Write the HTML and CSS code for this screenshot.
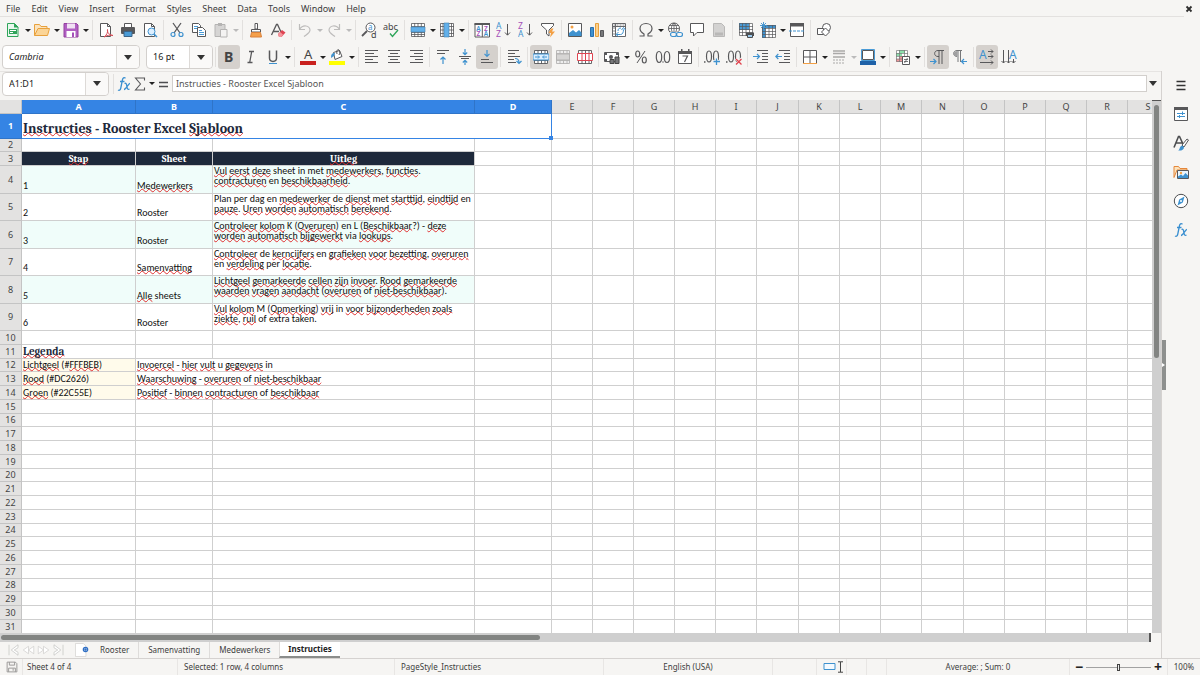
FILE: index.html
```html
<!DOCTYPE html>
<html lang="en">
<head>
<meta charset="utf-8">
<title>Rooster - Calc</title>
<link rel="stylesheet" href="styles.css">
</head>
<body>
<svg class="sprite" aria-hidden="true">
  <symbol id="i-new" viewBox="0 0 16 16"><path d="M2.500 1.500h7l3.500 3.500v9.500H2.500z" fill="#e9f7ee" stroke="#2fa55a"/><path d="M9 1v4.500h4.500z" fill="#2fa55a"/><path d="M4 7h8v5H4z" fill="#2fa55a"/><path d="M5 8.500h6M5 10.500h3" stroke="#fff"/></symbol>
  <symbol id="i-open" viewBox="0 0 16 16"><path d="M.5 13.500v-11h5l1.500 2h6v2" fill="#fbe3bd" stroke="#e8a13c"/><path d="M.5 13.500L4 6.500h11.500l-2 7z" fill="#fbd597" stroke="#e8a13c"/></symbol>
  <symbol id="i-save" viewBox="0 0 16 16"><path d="M1 1.500h12.500l1.500 1.500v12H1z" fill="#b05fc2" stroke="#94409f"/><path d="M4 1.500h8v5H4z" fill="#f1e2f4"/><path d="M3.500 9h9v6h-9z" fill="#fff"/><path d="M9 10.500h2V15H9z" fill="#a44fb8"/></symbol>
  <symbol id="i-pdf" viewBox="0 0 16 16"><path d="M2.500 1.500h7l3 3v10h-10z" fill="#fff" stroke="#58585a"/><path d="M9.500 1.500v3h3" fill="none" stroke="#58585a"/><path d="M6 15c3-2 4-5 3.500-7.500C9 11 11.500 13 15 13.500 12 12.500 9 13.500 6 15z" fill="#fff" stroke="#d64a55"/></symbol>
  <symbol id="i-print" viewBox="0 0 16 16"><path d="M4.500 5V1.500h7V5" fill="#fff" stroke="#58585a"/><rect x="1" y="5" width="14" height="7" rx="1" fill="#58585a"/><path d="M4 9.500h8v5H4z" fill="#4a9bd6" stroke="#3c6488"/></symbol>
  <symbol id="i-preview" viewBox="0 0 16 16"><path d="M2.500 1.500h7l3 3v10h-10z" fill="#fff" stroke="#58585a"/><path d="M9.500 1.500v3h3" fill="none" stroke="#58585a"/><circle cx="9.500" cy="9.500" r="3.500" fill="#dcefff" stroke="#3f92cf"/><path d="M12 12l3 3" stroke="#3f92cf" stroke-width="1.500"/></symbol>
  <symbol id="i-cut" viewBox="0 0 16 16"><path d="M4 1l7 10M12 1L5 11" stroke="#58585a" stroke-width="1.300"/><circle cx="4" cy="12.500" r="2" fill="none" stroke="#3f92cf" stroke-width="1.200"/><circle cx="12" cy="12.500" r="2" fill="none" stroke="#3f92cf" stroke-width="1.200"/></symbol>
  <symbol id="i-copy" viewBox="0 0 16 16"><path d="M1.500 1.500h6l2 2v7h-8z" fill="#fff" stroke="#58585a"/><path d="M6.500 5.500h5l3 3v6h-8z" fill="#fff" stroke="#58585a"/><path d="M8 8.500h3M8 10.500h5M8 12.500h5M3 4.500h4M3 6.500h3" stroke="#4a9bd6"/></symbol>
  <symbol id="i-paste" viewBox="0 0 16 16"><path d="M2 2.500h10v12H2z" fill="#d6d5d4" stroke="#b5b4b3"/><path d="M5 1h4v3H5z" fill="#b5b4b3"/><path d="M7.500 7.500h6.500v7.500H7.500z" fill="#f4f3f2" stroke="#b5b4b3"/></symbol>
  <symbol id="i-brush" viewBox="0 0 16 16"><path d="M7 1.500h2.500V7H7z" fill="#fff" stroke="#58585a"/><path d="M3.500 7.500h9V10h-9z" fill="#fff" stroke="#58585a"/><path d="M3.500 10.500h9l1 4.500h-11z" fill="#f5a04a" stroke="#d8803a"/></symbol>
  <symbol id="i-clear" viewBox="0 0 16 16"><path d="M1.500 13L6.500 2.500h1L11 10M3.500 9.500H9" fill="none" stroke="#58585a" stroke-width="1.300"/><path d="M8 12l4-4 3.500 2.500-4 4.500H9z" fill="#df4552"/><path d="M8 12l2-2 3 2.500-1.500 2.500H9z" fill="#f4949b"/></symbol>
  <symbol id="i-undo" viewBox="0 0 16 16"><path d="M2.500 2v5.500H8M2.500 7.500C6 2 12.500 3.500 13 8c0 3-3.500 4.500-6 6.500" fill="none" stroke="#bdbcbb" stroke-width="1.200"/></symbol>
  <symbol id="i-redo" viewBox="0 0 16 16"><path d="M13.500 2v5.500H8M13.500 7.500C10 2 3.500 3.500 3 8c0 3 3.500 4.500 6 6.500" fill="none" stroke="#bdbcbb" stroke-width="1.200"/></symbol>
  <symbol id="i-find" viewBox="0 0 16 16"><circle cx="9.500" cy="5.500" r="4.500" fill="#fff" stroke="#58585a"/><path d="M6 9l-5 5" stroke="#58585a" stroke-width="1.800"/><text x="7" y="8" font-size="8" fill="#3f92cf">a</text><text x="10" y="15.500" font-size="9" fill="#444">d</text></symbol>
  <symbol id="i-spell" viewBox="0 0 16 16"><text x="0" y="8" font-size="9" fill="#444">abc</text><path d="M7 11.500l2.500 3L15 8" fill="none" stroke="#2fa55a" stroke-width="1.400"/></symbol>
  <symbol id="i-rows" viewBox="0 0 16 16"><path d="M1.500 1.500h13v13h-13z" fill="#fff"/><path d="M1.500 1.500h13v13h-13zM1.500 4.500h13M1.500 10.500h13M4.700 1v14M8 1v14M11.300 1v14M1 12.500h14" fill="none" stroke="#58585a" stroke-width=".8"/><path d="M1 5h14v5H1z" fill="#62b0ea" stroke="#3f7fae" stroke-width=".6"/></symbol>
  <symbol id="i-cols" viewBox="0 0 16 16"><path d="M1.500 1.500h13v13h-13z" fill="#fff"/><path d="M1.500 1.500h13v13h-13zM1 4.500h14M1 8h14M1 11.500h14M12.500 1v14M4 1v14" fill="none" stroke="#58585a" stroke-width=".8"/><path d="M5 1h5v14H5z" fill="#62b0ea" stroke="#3f7fae" stroke-width=".6"/></symbol>
  <symbol id="i-sort" viewBox="0 0 16 16"><path d="M1 1.500h14.500v13.500H1zM8.300 1v14" fill="#fff" stroke="#58585a"/><path d="M.5 1h15.500v2H.5z" fill="#58585a"/><g font-size="6.500" font-weight="600"><text x="2.300" y="8.800" fill="#3f92cf">A</text><text x="2.500" y="14.300" fill="#a44fb8">Z</text><text x="9.900" y="8.800" fill="#a44fb8">Z</text><text x="9.700" y="14.300" fill="#3f92cf">A</text></g></symbol>
  <symbol id="i-az" viewBox="0 0 16 16"><text x="0" y="7" font-size="8.500" fill="#3f92cf">A</text><text x="0" y="15" font-size="8.500" fill="#a44fb8">Z</text><path d="M11.500 2v11M9 10.500l2.500 2.700 2.500-2.700" fill="none" stroke="#58585a"/></symbol>
  <symbol id="i-za" viewBox="0 0 16 16"><text x="0" y="7" font-size="8.500" fill="#a44fb8">Z</text><text x="0" y="15" font-size="8.500" fill="#3f92cf">A</text><path d="M11.500 2v11M9 10.500l2.500 2.700 2.500-2.700" fill="none" stroke="#58585a"/></symbol>
  <symbol id="i-filter" viewBox="0 0 16 16"><path d="M1.500 1.500h12v2L9 8v6l-2.500-2V8l-5-4.500z" fill="#fff" stroke="#58585a"/><path d="M11 6.500L8.500 11h2.500l-1 4.500 5-6h-3l1.500-3z" fill="#f3a044"/></symbol>
  <symbol id="i-image" viewBox="0 0 16 16"><path d="M1.500 1.500h13v13h-13z" fill="#fff" stroke="#58585a"/><circle cx="5" cy="5" r="1.500" fill="#f3a044"/><path d="M2 14l0-3 4-3 3 2.500L12 8l2.500 2.500V14z" fill="#3f92cf"/></symbol>
  <symbol id="i-chart" viewBox="0 0 16 16"><path d="M1.500 5.500h3v9h-3z" fill="#3f92cf" stroke="#2a6fb0"/><path d="M6.500 1.500h3v13h-3z" fill="#fbd08e" stroke="#e8a13c"/><path d="M11.500 8.500h3v6h-3z" fill="#77787a" stroke="#58585a"/></symbol>
  <symbol id="i-pivot" viewBox="0 0 16 16"><path d="M1.500 1.500h13v13h-13zM4.500 1v14M1 4.500h14" fill="#fff" stroke="#66676a"/><path d="M2.500 3h11M3 5v9" stroke="#8a8a8c" stroke-dasharray="2 1"/><path d="M5.500 12.500h4c2 0 3-2 3-5M5 12.500l2.500-2.500M5 12.500l2.500 2M10.500 8l2-2.500 2 2.500M7 9c0-2 1-3 3-3" fill="none" stroke="#3f92cf"/></symbol>
  <symbol id="i-omega" viewBox="0 0 16 16"><path d="M1.500 14H6v-2C3.500 10.500 2 9 2 6.500 2 3.500 4.500 1.500 8 1.500s6 2 6 5c0 2.500-1.500 4-4 5.500v2h4.500" fill="none" stroke="#58585a" stroke-width="1.200"/></symbol>
  <symbol id="i-link" viewBox="0 0 16 16"><circle cx="7" cy="6.500" r="5.500" fill="#fff" stroke="#58585a"/><path d="M1.500 6.500h11M2.500 3.500h9M2.500 9.500h9M7 1v11M7 1c-3.500 3-3.500 8 0 11M7 1c3.500 3 3.500 8 0 11" fill="none" stroke="#58585a" stroke-width=".8"/><path d="M3 9.500h13v6H3z" fill="#f6f5f3"/><rect x="3.500" y="10.500" width="6" height="4" rx="2" fill="none" stroke="#3f92cf" stroke-width="1.200"/><rect x="9.500" y="10.500" width="6" height="4" rx="2" fill="none" stroke="#3f92cf" stroke-width="1.200"/></symbol>
  <symbol id="i-comment" viewBox="0 0 16 16"><path d="M1.500 1.500h13v9H8L4.500 14v-3.500h-3z" fill="#fff" stroke="#58585a"/></symbol>
  <symbol id="i-header" viewBox="0 0 16 16"><path d="M2.500 1.500h8l3 3v10h-11z" fill="#d3d2d1" stroke="#b9b8b7"/><path d="M4 10.500h8v3H4z" fill="#b9b8b7"/></symbol>
  <symbol id="i-area" viewBox="0 0 16 16"><path d="M1.500 1.500h13v12h-13z" fill="#fff"/><path d="M1 1h10v7H1z" fill="#4a9bd6"/><path d="M1.500 1.500h13v12h-13zM1 4.500h14M1 7.500h14M1 10.500h14M4.500 1v13M8 1v13M11.500 1v13" fill="none" stroke="#58585a" stroke-width=".7"/><path d="M8 10.500h8v3.500H8z" fill="#4d4e50"/><path d="M9.500 12.500h5v3h-5z" fill="#9dcbee" stroke="#4d4e50"/></symbol>
  <symbol id="i-freeze" viewBox="0 0 16 16"><path d="M3.500 3.500h12v12h-12z" fill="#fff"/><path d="M2 3h14v3H2zM2 3h3.500v13H2z" fill="#3f92cf"/><path d="M2.500 3.500h13v12h-13zM2 6.500h14M2 9.500h14M2 12.500h14M5.500 3v13M9 3v13M12.500 3v13" fill="none" stroke="#58585a" stroke-width=".7"/><path d="M3.500 0v7M0 3.500h7M1 1l5 5M6 1L1 6" stroke="#3f92cf" stroke-width=".9"/></symbol>
  <symbol id="i-split" viewBox="0 0 16 16"><path d="M1.500 2.500h13v12h-13z" fill="#fff" stroke="#58585a"/><path d="M1 1h14v3.500H1z" fill="#58585a"/><path d="M0 9h16" stroke="#3f92cf" stroke-dasharray="3 1"/></symbol>
  <symbol id="i-shapes" viewBox="0 0 16 16"><circle cx="10.500" cy="5.500" r="4" fill="#fff" stroke="#58585a"/><path d="M1.500 6.500h6v6h-6z" fill="#fff" stroke="#58585a"/><path d="M9.500 6l4 4-4 4-4-4z" fill="#fff" stroke="#58585a"/></symbol>

  <symbol id="i-bold" viewBox="0 0 16 16"><text x="3" y="13" font-size="14" font-weight="700" fill="#444">B</text></symbol>
  <symbol id="i-italic" viewBox="0 0 16 16"><path d="M6 2.500h5M4.500 13.500h5M8.700 2.500l-2 11" stroke="#58585a" stroke-width="1.300"/></symbol>
  <symbol id="i-underline" viewBox="0 0 16 16"><path d="M4.500 1.500V9c0 4.500 7 4.500 7 0V1.500" fill="none" stroke="#58585a" stroke-width="1.500"/><path d="M4 14.500h8" stroke="#3f92cf"/></symbol>
  <symbol id="i-color" viewBox="0 0 16 16"><text x="4" y="10" font-size="13" fill="#444">A</text><path d="M0 12h16v4H0z" fill="#c9211e"/></symbol>
  <symbol id="i-fill" viewBox="0 0 16 16"><path d="M4.500 3.500l6-2 2.500 6-7 3z" fill="#fff" stroke="#58585a"/><path d="M8 5c-1-4 1-5 2-4s1 3 0 5" fill="none" stroke="#58585a"/><path d="M2 9c0-4 1-5 4-5L5 7z" fill="#3f92cf"/><path d="M0 12h16v4H0z" fill="#ffff00"/></symbol>
  <symbol id="i-left" viewBox="0 0 16 16"><path d="M1 1.500h13M1 4.500h9M1 7.500h13M1 10.500h8M1 13.500h13" stroke="#58585a"/></symbol>
  <symbol id="i-center" viewBox="0 0 16 16"><path d="M2 1.500h12M4 4.500h8M2 7.500h12M4 10.500h8M2 13.500h12" stroke="#58585a"/></symbol>
  <symbol id="i-right" viewBox="0 0 16 16"><path d="M2 1.500h13M6 4.500h9M2 7.500h13M7 10.500h8M2 13.500h13" stroke="#58585a"/></symbol>
  <symbol id="i-top" viewBox="0 0 16 16"><path d="M2 1.500h12M2 4.500h8" stroke="#58585a"/><path d="M8 15V8M5.500 10.500L8 8l2.500 2.500" fill="none" stroke="#3f92cf" stroke-width="1.200"/></symbol>
  <symbol id="i-middle" viewBox="0 0 16 16"><path d="M2 7.500h12M4 9.500h8" stroke="#58585a"/><path d="M8 0v5.500M5.800 3.500L8 5.700l2.200-2.200M8 16v-4.500M5.800 13.500L8 11.300l2.200 2.200" fill="none" stroke="#3f92cf" stroke-width="1.200"/></symbol>
  <symbol id="i-bottom" viewBox="0 0 16 16"><path d="M2 10.500h8M2 13.500h12" stroke="#58585a"/><path d="M8 1v6M5.500 4.800L8 7.300l2.500-2.500" fill="none" stroke="#3f92cf" stroke-width="1.200"/></symbol>
  <symbol id="i-wrap" viewBox="0 0 16 16"><path d="M2 1.500h11M2 4.500h7M2 7.500h12M2 10.500h6M2 13.500h8" stroke="#58585a"/><path d="M9 9.500c3 0 4 1 4 4M10.500 12l2.500 2.500 2.500-2.500" fill="none" stroke="#3f92cf" stroke-width="1.200"/></symbol>
  <symbol id="i-merge" viewBox="0 0 16 16"><path d="M1.500 1.500h13v13h-13zM1 4.500h14M1 11.500h14M5 1v14M8.500 1v14M12 1v14" fill="#fff" stroke="#58585a" stroke-width=".9"/><path d="M0 5h16v6H0z" fill="#dcefff" stroke="#3f92cf"/><path d="M2 8h4M14 8h-4M5 6.500L6.500 8 5 9.500M11 6.500L9.500 8 11 9.500" fill="none" stroke="#3f92cf"/></symbol>
  <symbol id="i-merge2" viewBox="0 0 16 16"><path d="M1.500 1.500h13v13h-13zM1 4.500h14M1 11.500h14M5 1v14M8.500 1v14M12 1v14" fill="#eee" stroke="#b4b3b2" stroke-width=".9"/><path d="M1.500 5h13v6h-13z" fill="#d6d5d4" stroke="#b4b3b2"/></symbol>
  <symbol id="i-split2" viewBox="0 0 16 16"><path d="M1.500 1.500h13v13h-13zM5 1v14M8.500 1v14M12 1v14" fill="#fff" stroke="#58585a" stroke-width=".9"/><path d="M.5 4.500h15v7H.5zM5 4.500v7M8.500 4.500v7M12 4.500v7" fill="#fff" stroke="#df4552"/></symbol>
  <symbol id="i-money" viewBox="0 0 16 16"><path d="M.5 3.500h14v9H.5z" fill="#fff" stroke="#58585a"/><path d="M1 4h2v2H1zM12 4h2v2h-2zM1 10h2v2H1z" fill="#58585a"/><circle cx="7" cy="8" r="2" fill="#58585a"/><path d="M6 10.500h4v4H6zM11 8h4v6.500h-4z" fill="#77787a" stroke="#444"/></symbol>
  <symbol id="i-percent" viewBox="0 0 16 16"><ellipse cx="4.700" cy="5" rx="2" ry="3" fill="none" stroke="#58585a" stroke-width="1.200"/><ellipse cx="11.300" cy="11" rx="2" ry="3" fill="none" stroke="#58585a" stroke-width="1.200"/><path d="M12 2L4 14" stroke="#58585a"/></symbol>
  <symbol id="i-number" viewBox="0 0 16 16"><ellipse cx="4" cy="8" rx="2.700" ry="5.500" fill="none" stroke="#58585a" stroke-width="1.200"/><ellipse cx="12" cy="8" rx="2.700" ry="5.500" fill="none" stroke="#58585a" stroke-width="1.200"/><path d="M7.500 13h1" stroke="#58585a" stroke-width="1.500"/></symbol>
  <symbol id="i-date" viewBox="0 0 16 16"><path d="M1.500 2.500h13v12h-13z" fill="#fff" stroke="#58585a"/><path d="M1 2h14v3H1zM4 0h1.500v3H4zM11 0h1.500v3H11z" fill="#58585a"/><path d="M5.500 7h5l-3 6" fill="none" stroke="#58585a" stroke-width="1.200"/></symbol>
  <symbol id="i-adddec" viewBox="0 0 16 16"><path d="M0 13h1.500" stroke="#58585a" stroke-width="1.500"/><ellipse cx="5" cy="7.500" rx="2.500" ry="5.500" fill="none" stroke="#58585a" stroke-width="1.200"/><ellipse cx="12" cy="7.500" rx="2.500" ry="5.500" fill="none" stroke="#58585a" stroke-width="1.200"/><path d="M12.500 9v7M9 12.500h7" stroke="#f6f5f3" stroke-width="3"/><path d="M12.500 9.500V16M9.500 12.500H16" stroke="#3f92cf" stroke-width="1.300"/></symbol>
  <symbol id="i-deldec" viewBox="0 0 16 16"><path d="M0 13h1.500" stroke="#58585a" stroke-width="1.500"/><ellipse cx="5" cy="7.500" rx="2.500" ry="5.500" fill="none" stroke="#58585a" stroke-width="1.200"/><ellipse cx="12" cy="7.500" rx="2.500" ry="5.500" fill="none" stroke="#58585a" stroke-width="1.200"/><path d="M10 9.500l6 6M16 9.500l-6 6" stroke="#f6f5f3" stroke-width="3"/><path d="M10 10l5.500 5.500M15.500 10L10 15.500" stroke="#e0434e" stroke-width="1.300"/></symbol>
  <symbol id="i-indent" viewBox="0 0 16 16"><path d="M4 1.500h11M9 4.500h6M9 7.500h6M9 10.500h6M4 13.500h11" stroke="#58585a"/><path d="M0 7.500h6.500M4 5l2.500 2.500L4 10" fill="none" stroke="#3f92cf" stroke-width="1.200"/></symbol>
  <symbol id="i-outdent" viewBox="0 0 16 16"><path d="M4 1.500h11M9 4.500h6M9 7.500h6M9 10.500h6M4 13.500h11" stroke="#58585a"/><path d="M7 7.500H.8M3.300 5L.8 7.500 3.300 10" fill="none" stroke="#3f92cf" stroke-width="1.200"/></symbol>
  <symbol id="i-borders" viewBox="0 0 16 16"><path d="M1.500 1.500h13v13h-13zM8 1v14M1 8h14" fill="#fff" stroke="#58585a"/><path d="M1 14.500h14" stroke="#f3a044"/></symbol>
  <symbol id="i-bstyle" viewBox="0 0 16 16"><path d="M2 2h12M2 4.500h12M2 8h12" stroke="#aaa9a8" stroke-width="1.300"/><path d="M2 11h12M2 14h12" stroke="#aaa9a8" stroke-dasharray="2 1"/></symbol>
  <symbol id="i-bcolor" viewBox="0 0 16 16"><path d="M2.500 1.500h11v9h-11z" fill="#fff" stroke="#58585a"/><path d="M1.500.5h13v11h-13z" fill="none" stroke="#4a9bd6"/><path d="M0 12h16v4H0z" fill="#1f62a8"/></symbol>
  <symbol id="i-cond" viewBox="0 0 16 16"><path d="M1 1h12v12H1z" fill="#fff"/><path d="M4 1h6v3H4z" fill="#8fe0ad"/><path d="M1 4h6v3H1z" fill="#8fe0ad"/><path d="M4 7h4v3H4zM1 10h6v3H1z" fill="#f3999c"/><path d="M1.500 1.500h11v11h-11zM1 4.500h12M1 7.500h12M1 10h12M4.500 1v12M9.500 1v12" fill="none" stroke="#77787a" stroke-width=".7"/><path d="M7.500 7.500h7v8h-7z" fill="#fff" stroke="#58585a"/><path d="M9 10.500h4M9 12.500h4M12.500 9l-3 5" stroke="#58585a" stroke-width=".8"/></symbol>
  <symbol id="i-ltr" viewBox="0 0 16 16"><path d="M14 1.500H8c-4.500 0-4.500 6 0 6h1M9 1.500V15M12 1.500V15" fill="none" stroke="#58585a"/><path d="M0 12.500h6M3.500 10L6 12.500 3.500 15" fill="none" stroke="#3f92cf" stroke-width="1.200"/></symbol>
  <symbol id="i-rtl" viewBox="0 0 16 16"><path d="M10 1.500H5c-4.500 0-4.500 6 0 6M6 1.500V13M8.500 1.500V13" fill="none" stroke="#77787a"/><path d="M5.500 2v5.500C.5 7.500.5 2 5.500 2z" fill="#a0a0a1"/><path d="M15 12.500H9.500M12 10l-2.500 2.500L12 15" fill="none" stroke="#3f92cf" stroke-width="1.200"/></symbol>
  <symbol id="i-horiz" viewBox="0 0 16 16"><text x="0" y="10" font-size="12" fill="#3f92cf">A</text><path d="M9 2.500h5M9 7.500h5M1 13.500h13M12 .5l2 2-2 2M12 5.500l2 2-2 2M12 11.500l2 2-2 2" fill="none" stroke="#58585a"/></symbol>
  <symbol id="i-vert" viewBox="0 0 16 16"><text x="8" y="10" font-size="12" fill="#3f92cf">A</text><path d="M2.500 1v13M7.500 1v13M12.500 10v4M.5 12l2 2 2-2M5.500 12l2 2 2-2M10.500 12l2 2 2-2" fill="none" stroke="#58585a"/></symbol>

  <symbol id="i-fx" viewBox="0 0 16 16"><path d="M9.500 2.200C8 1 6.800 2 6.400 4L4.800 12c-.4 2-1.300 2.800-2.800 2M4 5.500h4.500" fill="none" stroke="#3a8fd0" stroke-width="1.300"/><path d="M8.500 7.500c1.500-.8 2 .3 2.300 2.500.3 2.500 1 4 2.700 3M14 7.300c-1.500 0-4 6-6 6.200" fill="none" stroke="#3a8fd0" stroke-width="1.300"/></symbol>
  <symbol id="i-sum" viewBox="0 0 16 16"><path d="M12.500 4.500v-2.500H3.500L8.500 8l-5 6h9v-2.500" fill="none" stroke="#58585a" stroke-width="1.100"/></symbol>
  <symbol id="i-equal" viewBox="0 0 16 16"><path d="M4 6.500h9M4 10.500h9" stroke="#4d4e50" stroke-width="1.600"/></symbol>
  <symbol id="i-menu" viewBox="0 0 16 16"><path d="M3.500 4.500h9M3.500 8.500h9M3.500 12.500h9" stroke="#333" stroke-width="1.500"/></symbol>
  <symbol id="i-props" viewBox="0 0 16 16"><path d="M1.500 1.500h13v13h-13z" fill="#fff" stroke="#58585a"/><path d="M1 1h14v3H1z" fill="#58585a"/><path d="M4 7.500h8M4 10.500h8M9.500 5.500v3.500M6.500 9v3" stroke="#3f92cf"/></symbol>
  <symbol id="i-style" viewBox="0 0 16 16"><path d="M1 12.500L5.500 1.500h1L10 9M3 8h6" fill="none" stroke="#4d4e50" stroke-width="1.600"/><path d="M9 10l5-6 1.500 1L11 12z" fill="#fff" stroke="#58585a"/><path d="M5 15.500c2 0 1-4 4-5l2 1.500c0 3-3 4-6 3.500z" fill="#3f92cf"/></symbol>
  <symbol id="i-gallery" viewBox="0 0 16 16"><path d="M1 13.500v-11h4.500l1.500 2h7V6H4z" fill="#fbe3bd" stroke="#e5873a"/><path d="M4.500 6.500h11v8h-11z" fill="#e9f4fc" stroke="#58585a"/><circle cx="8" cy="9" r="1.200" fill="#f3a044"/><path d="M5 14v-1.500l3-2 2 1.500 2.500-3 2.500 2.500V14z" fill="#3f92cf"/></symbol>
  <symbol id="i-nav" viewBox="0 0 16 16"><circle cx="8" cy="8" r="6.700" fill="#fff" stroke="#4d4e50"/><path d="M11.500 3.500L9.800 9.500 4.500 12.500 6.200 6.500z" fill="#3f92cf"/><circle cx="8" cy="8" r="1" fill="#fff"/></symbol>
  <symbol id="i-disk" viewBox="0 0 16 16"><path d="M1.500 1.500h11l2 2v11h-13zM4.500 1.500v4h7v-4M3.500 14.500v-5h9v5M9.500 10v3" fill="none" stroke="#9a9998" stroke-width="1.300"/></symbol>
  <symbol id="i-first" viewBox="0 0 16 16"><path d="M2 1v14M14 1L5 8l9 7V11L9 8l5-3z" fill="#fff" stroke="#c6c5c3"/></symbol>
  <symbol id="i-prev" viewBox="0 0 16 16"><path d="M8 3L1 8l7 5zM15 3L8 8l7 5z" fill="#fff" stroke="#d0cfcd"/></symbol>
  <symbol id="i-next" viewBox="0 0 16 16"><path d="M1 3l7 5-7 5zM8 3l7 5-7 5z" fill="#fff" stroke="#d0cfcd"/></symbol>
  <symbol id="i-last" viewBox="0 0 16 16"><path d="M14 1v14M2 1l9 7-9 7V11l5-3-5-3z" fill="#fff" stroke="#c6c5c3"/></symbol>
  <symbol id="i-addsheet" viewBox="0 0 16 16"><path d="M.5.500h9l3 3v12H.5z" fill="#fff" stroke="#d8d7d5"/><circle cx="12" cy="7.500" r="2.400" fill="#fff" stroke="#2f6fc4" stroke-width="1.600"/><path d="M12 6v3M10.500 7.500h3" stroke="#2f6fc4"/></symbol>
</svg>

<header class="menubar">
  <nav class="menus" aria-label="Main menu">
    <button>File</button><button>Edit</button><button>View</button><button>Insert</button><button>Format</button><button>Styles</button><button>Sheet</button><button>Data</button><button>Tools</button><button>Window</button><button>Help</button>
  </nav>
  <button class="close" aria-label="Close document"><svg viewBox="0 0 8 8"><path d="M1.500 1.500l5 5M6.500 1.500l-5 5" stroke="#2e2e2e" stroke-width="1.800"/></svg></button>
</header>

<div class="toolbar" data-icons="new v open v save v | pdf print preview | cut copy paste x | brush clear | undo x redo x | find spell | rows v cols v | sort az za filter | image chart pivot | omega v link comment header | area freeze v split | shapes"></div>
<div class="toolbar">
  <div class="combo combo-font"><input aria-label="Font name" value="Cambria"><button aria-label="Font list"></button></div>
  <div class="combo combo-size"><input aria-label="Font size" value="16 pt"><button aria-label="Size list"></button></div>
  <div class="tools" data-icons="| bold* italic underline v | color v fill v | left center right | top middle bottom* | wrap | merge* merge2 split2 | money v percent number date | adddec deldec | indent outdent | borders v bstyle x bcolor v | cond v | ltr* rtl | horiz* vert"></div>
</div>

<main class="workspace">
  <section class="document">
    <div class="formula">
      <div class="combo combo-name"><input aria-label="Name box" value="A1:D1"><button aria-label="Names"></button></div>
      <div class="tools" data-icons="|"></div>
      <button class="small" aria-label="Function wizard"><svg><use href="#i-fx"/></svg></button>
      <button class="small" aria-label="Select function"><svg><use href="#i-sum"/></svg></button>
      <button class="arrow" aria-label="Function list"></button>
      <button class="small" aria-label="Formula"><svg><use href="#i-equal"/></svg></button>
      <input class="formula-input" aria-label="Input line" value="Instructies - Rooster Excel Sjabloon">
      <button class="expand" aria-label="Expand formula bar"></button>
    </div>
    <div class="view">
      <div class="sheet"><table id="grid"></table></div>
      <div class="vscroll"><div class="thumb"></div></div>
    </div>
    <div class="hscroll"><div class="thumb"></div></div>
    <div class="tabs">
      <button class="mini" aria-label="First sheet"><svg><use href="#i-first"/></svg></button>
      <button class="mini" aria-label="Previous sheet"><svg><use href="#i-prev"/></svg></button>
      <button class="mini" aria-label="Next sheet"><svg><use href="#i-next"/></svg></button>
      <button class="mini" aria-label="Last sheet"><svg><use href="#i-last"/></svg></button>
      <button class="add" aria-label="Add sheet"><svg><use href="#i-addsheet"/></svg></button>
      <button class="tab">Rooster</button><button class="tab">Samenvatting</button><button class="tab">Medewerkers</button><button class="tab current">Instructies</button>
    </div>
  </section>
  <div class="handle"><button aria-label="Hide sidebar"></button></div>
  <aside class="sidebar">
    <button aria-label="Sidebar settings"><svg><use href="#i-menu"/></svg></button>
    <button aria-label="Properties"><svg><use href="#i-props"/></svg></button>
    <button aria-label="Styles"><svg><use href="#i-style"/></svg></button>
    <button aria-label="Gallery"><svg><use href="#i-gallery"/></svg></button>
    <button aria-label="Navigator"><svg><use href="#i-nav"/></svg></button>
    <button aria-label="Functions"><svg><use href="#i-fx"/></svg></button>
  </aside>
</main>

<footer class="status">
  <span class="disk"><svg><use href="#i-disk"/></svg></span>
  <span class="s-sheet">Sheet 4 of 4</span>
  <span class="s-select">Selected: 1 row, 4 columns</span>
  <span class="s-page">PageStyle_Instructies</span>
  <span class="s-lang">English (USA)</span>
  <span class="s-gap"></span>
  <span class="s-mode"><svg viewBox="0 0 20 12"><path d="M1 2.500h11v6H1z" fill="#f4faff" stroke="#3f92cf"/><path d="M15 .8h5M15 11.200h5M17.500 1v10" stroke="#444"/></svg></span>
  <span class="s-cell"></span><span class="s-cell"></span>
  <span class="s-sum">Average: ; Sum: 0</span>
  <span class="s-zoom"><button aria-label="Zoom out">−</button><input type="range" min="0" max="100" value="50" aria-label="Zoom"><button aria-label="Zoom in">+</button></span>
  <span class="s-pct">100%</span>
</footer>
<script src="sheet.js"></script>
</body>
</html>
```

FILE: styles.css
```css
* { box-sizing: border-box; }
body {
  margin: 0;
  height: 100vh;
  display: flex;
  flex-direction: column;
  overflow: hidden;
  background: #f6f5f3;
  color: #3d3d3d;
  font: 9px/12px "Noto Sans", sans-serif;
}
button, input { font: inherit; color: inherit; }
button { border: 0; background: none; padding: 0; }
input { border: 0; background: none; padding: 0; min-width: 0; outline: 0; }
svg { display: block; width: 16px; height: 16px; flex: none; }
svg text { font-family: "Noto Sans", sans-serif; }
.sprite { display: none; }

.menubar { display: flex; height: 17px; flex: none; padding-right: 7px; }
.menus { display: flex; flex: 1; gap: 11px; padding-left: 6px; margin-right: 1px; border-bottom: 1px solid #e3e1df; }
.menus button { padding-top: 1px; }
.close svg { width: 8px; height: 8px; }

.toolbar { display: flex; align-items: center; height: 27px; flex: none; padding: 0 0 1px 2px; }
.tools { display: flex; align-items: center; }
.tool { display: flex; align-items: center; justify-content: center; width: 22px; height: 24px; border-radius: 3px; }
.tool.on { background: #d5d1cd; }
.arrow { display: flex; align-items: center; justify-content: center; width: 7px; height: 24px; }
.arrow::before, .combo button::before, .expand::before {
  content: "";
  border: 3px solid transparent;
  border-top-color: #222;
  border-bottom: 0;
}
.arrow.off::before { border-top-color: #bbb; }
.combo button::before, .expand::before { border-width: 5px 4px 0; border-top-color: #333; }
.sep { width: 1px; height: 20px; margin: 0 2px; background: #e2e0de; }
.arrow + .sep { margin-left: 3px; }

.combo { display: flex; height: 24px; flex: none; border: 1px solid #d3d0cd; border-radius: 4px; background: #fff; margin: 0 6px 0 0; color: #222; }
.combo input { flex: 1; padding-left: 6px; }
.combo button { display: flex; width: 23px; align-items: center; justify-content: center; border-left: 1px solid #dddad7; background: #faf9f8; border-radius: 0 4px 4px 0; }
.combo-font { width: 138px; }
.combo-font input { font-style: italic; }
.combo-size { width: 67px; margin-right: 0; }
.combo-name { width: 107px; margin-right: 2px; }

.workspace { display: flex; flex: 1; min-height: 0; }
.document { display: flex; flex-direction: column; flex: 1; min-width: 0; }
.formula { display: flex; align-items: center; height: 29px; flex: none; padding: 0 4px 5px 2px; border-top: 1px solid #e6e4e2; }
.formula-input { flex: 1; height: 17px; margin-left: 1px; padding-left: 3px; border: 1px solid #d2cfcc; background: #fff; color: #555; }
.expand { display: flex; width: 10px; justify-content: flex-end; }

.view { display: flex; flex: 1; min-height: 0; }
.sheet { flex: 1; min-width: 0; overflow: hidden; background: #fff; }
#grid { border-spacing: 0; table-layout: fixed; width: 1169px; color: #111; font: 10px/10px Carlito, Lato, sans-serif; }
#grid th, #grid td { padding: 0 1px; border: 0 solid #cfcfcf; border-width: 0 1px 1px 0; white-space: pre; vertical-align: bottom; text-align: left; }
#grid td { padding-bottom: 1px; }
#grid th { padding: 0; background: #e3e2e1; border-color: #c4c4c4; color: #444; text-align: center; vertical-align: middle; font: 9px/12px "Noto Sans", sans-serif; }
#grid th.sel { background: #3584e4; border-color: #2f74c8; color: #fff; font-weight: 700; }
#grid tr { height: 14px; }
#grid tr.short { height: 13px; }
#grid tr.r1 { height: 25px; }
#grid tr.tall { height: 28px; }
#grid tr.tall.odd { height: 27px; }
#grid tr.tall td { padding-bottom: 2px; }
#grid td.title { position: relative; padding-bottom: 0; border-color: #3584e4; border-width: 0 1px 1px 0; color: #1e293b; font: 700 14px/18px Cambria, Caladea, "Noto Serif", "Liberation Serif", serif; }
#grid td.title::after { content: ""; position: absolute; right: -2px; bottom: -2px; width: 4px; height: 4px; background: #3584e4; }
#grid td.head { padding-bottom: 0; background: #1e293b; color: #fff; text-align: center; font: 700 10px/12px Cambria, Caladea, "Noto Serif", "Liberation Serif", serif; }
#grid td.legend { padding-bottom: 0; color: #1e293b; font: 700 11px/12px Cambria, Caladea, "Noto Serif", "Liberation Serif", serif; }
#grid td.mint { background: #f0fdfa; }
#grid td.cream { background: #fffbeb; }
#grid tr.tall td.wrap { padding-bottom: 0; vertical-align: top; }
#grid td.spill { border-right-color: #fff; }
.typo { text-decoration: underline wavy #e03030 1px; text-underline-offset: -1px; text-decoration-skip-ink: none; }

.vscroll { width: 9px; padding: 4px 1px 0 2px; background: #cfcfcf; border-top: 1px solid #555; }
.vscroll .thumb { width: 5px; height: 48%; border-radius: 3px; background: #828482; }
.hscroll { height: 9px; flex: none; margin-right: 10px; padding: 2px 1px; background: #cfcfcf; border-right: 2px solid #555; }
.hscroll .thumb { width: 47%; height: 5px; border-radius: 3px; background: #828482; }
.tabs { display: flex; align-items: center; height: 16px; flex: none; padding-left: 6px; font-size: 8px; }
.mini svg { width: 15px; height: 12px; }
.add { margin: 0 2px 0 9px; }
.add svg { width: 14px; height: 14px; }
.tab { height: 16px; padding: 0 9px; border-left: 1px solid #dedcda; }
.tab.current { padding: 0 8px; background: #fff; border-bottom: 2px solid #8b8d8b; font-weight: 700; color: #222; }
.add + .tab { border-left: 0; }

.handle { display: flex; width: 5px; flex: none; align-items: center; border-left: 1px solid #d5d2d0; }
.handle button { display: flex; align-items: center; width: 5px; height: 50px; background: #8e908e; }
.handle button::before { content: ""; border: 2px solid transparent; border-left: 3px solid #fff; border-right: 0; }
.sidebar { display: flex; flex-direction: column; width: 34px; flex: none; align-items: center; gap: 13px; padding: 6px 4px 0 0; }

.status { display: flex; height: 17px; flex: none; align-items: stretch; border-top: 1px solid #d5d2d0; font-size: 8px; line-height: 16px; }
.status > span { border-right: 1px solid #e8e6e4; }
.disk { width: 23px; padding: 2px 6px; }
.disk svg { width: 12px; height: 12px; }
.s-sheet { width: 155px; padding-left: 4px; }
.s-select { width: 217px; padding-left: 6px; }
.s-page { width: 209px; padding-left: 6px; }
.s-lang { width: 169px; text-align: center; }
.s-gap { flex: 1; }
.s-mode { width: 30px; padding: 2px 6px; }
.s-mode svg { width: 20px; height: 12px; }
.s-cell { width: 20px; }
.s-sum { width: 183px; text-align: center; }
.s-zoom { display: flex; width: 98px; align-items: center; padding: 0 5px; }
.s-zoom button { width: 8px; color: #222; font-size: 14px; font-weight: 700; }
.s-zoom input { flex: 1; height: 10px; margin: 0 3px; appearance: none; background: linear-gradient(#a2a2a2, #a2a2a2) center / 100% 1px no-repeat; }
.s-zoom input::-webkit-slider-thumb { appearance: none; width: 3px; height: 7px; border: 1px solid #444; background: #eee; }
.status .s-pct { width: 32px; border-right: 0; text-align: center; }
```

FILE: sheet.js
```js
// Toolbars: icon names, "v"/"x" = enabled/disabled drop-down arrow, "|" = separator, "*" = pressed.
document.querySelectorAll("[data-icons]").forEach(bar => {
  bar.innerHTML = bar.dataset.icons.split(" ").map(n => {
    if (n === "|") return '<span class="sep"></span>';
    if (n === "v" || n === "x") return `<button class="arrow${n === "x" ? " off" : ""}" aria-label="More"></button>`;
    const id = n.replace("*", "");
    return `<button class="tool${n.endsWith("*") ? " on" : ""}" aria-label="${id}"><svg><use href="#i-${id}"/></svg></button>`;
  }).join("");
});

// Words in braces get a spelling mark.
const rows = {
  1: ["{Instructies} - Rooster Excel {Sjabloon}"],
  3: ["{Stap}", "Sheet", "{Uitleg}"],
  4: ["1", "{Medewerkers}", "{Vul} {eerst} {deze} sheet in met {medewerkers}, {functies}.\n{contracturen} en {beschikbaarheid}."],
  5: ["2", "Rooster", "Plan per dag en {medewerker} de {dienst} met {starttijd}, {eindtijd} en\n{pauze}. {Uren} {worden} {automatisch} {berekend}."],
  6: ["3", "Rooster", "{Controleer} {kolom} K ({Overuren}) en L ({Beschikbaar}?) - {deze}\n{worden} {automatisch} {bijgewerkt} via {lookups}."],
  7: ["4", "{Samenvatting}", "{Controleer} de {kerncijfers} en {grafieken} {voor} {bezetting}, {overuren}\nen {verdeling} per {locatie}."],
  8: ["5", "{Alle} sheets", "{Lichtgeel} {gemarkeerde} {cellen} {zijn} {invoer}. {Rood} {gemarkeerde}\n{waarden} {vragen} {aandacht} ({overuren} of {niet-beschikbaar})."],
  9: ["6", "Rooster", "{Vul} {kolom} M ({Opmerking}) {vrij} in {voor} {bijzonderheden} {zoals}\n{ziekte}, {ruil} of extra taken."],
  11: ["{Legenda}"],
  12: ["{Lichtgeel} (#{FFFBEB})", "{Invoercel} - {hier} {vult} u {gegevens} in"],
  13: ["{Rood} (#DC2626)", "{Waarschuwing} - {overuren} of {niet-beschikbaar}"],
  14: ["{Groen} (#22C55E)", "{Positief} - {binnen} {contracturen} of {beschikbaar}"]
};
const widths = [22, 114, 77, 262, 77, 41, 41, 41, 41, 41, 42, 41, 41, 41, 42, 41, 41, 41, 41, 41];
const mark = t => t.replace(/{([^}]*)}/g, '<span class="typo">$1</span>');

function cellClass(r, c) {
  if (r === 3 && c < 3) return "head";
  if (r === 11 && c === 0) return "legend";
  if (r >= 12 && r <= 14 && c === 0) return "cream";
  if (r >= 12 && r <= 14 && c === 1) return "spill";
  if (r >= 4 && r <= 9 && c < 3) return (r % 2 ? "" : "mint") + (c === 2 ? " wrap" : "");
  return "";
}
function rowClass(r) {
  if (r === 1) return "r1";
  if (r >= 4 && r <= 9) return r % 2 ? "tall odd" : "tall";
  return r === 2 || (r > 9 && r % 4 === 0) ? "short" : "";
}

let html = "<colgroup>" + widths.map(w => `<col style="width:${w}px">`).join("") + "</colgroup><tr><th></th>";
for (let c = 0; c < 19; c++) html += `<th${c < 4 ? ' class="sel"' : ""}>${String.fromCharCode(65 + c)}</th>`;
html += "</tr>";
for (let r = 1; r <= 31; r++) {
  html += `<tr class="${rowClass(r)}"><th${r === 1 ? ' class="sel"' : ""}>${r}</th>`;
  if (r === 1) html += `<td class="title" colspan="4">${mark(rows[1][0])}</td>`;
  for (let c = r === 1 ? 4 : 0; c < 19; c++) {
    html += `<td class="${cellClass(r, c)}">${mark((rows[r] && rows[r][c]) || "")}</td>`;
  }
  html += "</tr>";
}
document.getElementById("grid").innerHTML = html;
```
